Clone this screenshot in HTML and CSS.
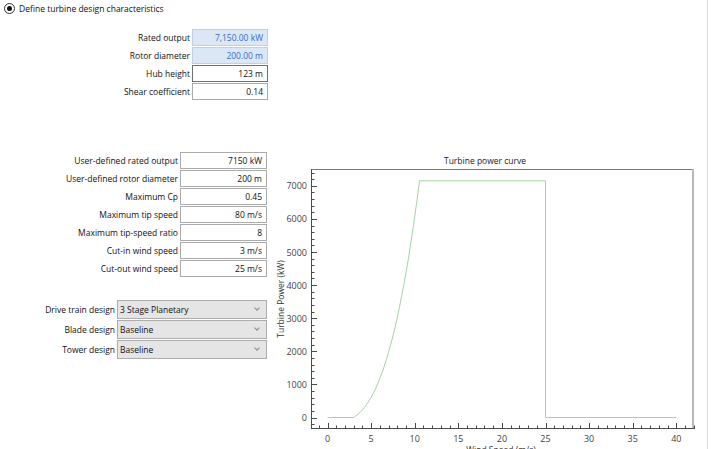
FILE: index.html
```html
<!DOCTYPE html>
<html lang="en">
<head>
    <meta charset="UTF-8">
    <title>Turbine design</title>
    <link rel="stylesheet" href="styles.css">
</head>
<body>
<div class="window">
    <label class="option">
        <span class="radio"><span class="dot"></span></span>
        Define turbine design characteristics
    </label>

    <div class="fields summary">
        <span class="lbl">Rated output</span><span class="box readonly">7,150.00 kW</span>
        <span class="lbl">Rotor diameter</span><span class="box readonly">200.00 m</span>
        <span class="lbl">Hub height</span><span class="box focused">123 m</span>
        <span class="lbl">Shear coefficient</span><span class="box">0.14</span>
    </div>

    <div class="lower">
        <div class="inputs">
            <div class="fields custom">
                <span class="lbl">User-defined rated output</span><span class="box">7150 kW</span>
                <span class="lbl">User-defined rotor diameter</span><span class="box">200 m</span>
                <span class="lbl">Maximum Cp</span><span class="box">0.45</span>
                <span class="lbl">Maximum tip speed</span><span class="box">80 m/s</span>
                <span class="lbl">Maximum tip-speed ratio</span><span class="box">8</span>
                <span class="lbl">Cut-in wind speed</span><span class="box">3 m/s</span>
                <span class="lbl">Cut-out wind speed</span><span class="box">25 m/s</span>
            </div>

            <div class="fields combos">
                <span class="lbl">Drive train design</span><span class="combo">3 Stage Planetary<i class="chev"></i></span>
                <span class="lbl">Blade design</span><span class="combo">Baseline<i class="chev"></i></span>
                <span class="lbl">Tower design</span><span class="combo">Baseline<i class="chev"></i></span>
            </div>
        </div>

        <svg class="chart" width="449" height="299" viewBox="258 150 449 299">
            <text class="title" x="485" y="163" text-anchor="middle">Turbine power curve</text>
            <line x1="311" y1="168.5" x2="693" y2="168.5" class="frame-top"/>
            <line x1="693" y1="168" x2="693" y2="427" class="frame-right"/>
            <g id="ticks"></g>
            <line x1="311.5" y1="168" x2="311.5" y2="428" class="axis"/>
            <line x1="311" y1="427.5" x2="695" y2="427.5" class="axis"/>
            <g id="labels" class="tick-text"></g>
            <path id="curve" class="curve"/>
            <text class="axis-title" transform="translate(284 298) rotate(-90)" text-anchor="middle">Turbine Power (kW)</text>
            <text class="axis-title" x="501" y="452" text-anchor="middle">Wind Speed (m/s)</text>
        </svg>
    </div>
</div>

<script>
    const ns = 'http://www.w3.org/2000/svg';
    const ticks = document.getElementById('ticks');
    const labels = document.getElementById('labels');

    // axis scales in page pixels
    const sx = v => 327.5 + v * 8.72;
    const sy = p => 416.5 - p * 0.0331;

    let d = '';
    for (let v = -1; v <= 42; v++) {
        const x = Math.round(sx(v)) + 0.5;
        const len = v % 5 === 0 ? 5 : 2.5;
        d += `M${x} 427V${427 - len}`;
    }
    for (let p = -200; p <= 7400; p += 200) {
        const y = Math.round(sy(p)) + 0.5;
        const len = p % 1000 === 0 ? 5 : 2.5;
        d += `M312 ${y}H${312 + len}`;
    }
    const tp = document.createElementNS(ns, 'path');
    tp.setAttribute('d', d);
    tp.setAttribute('class', 'tick');
    ticks.appendChild(tp);

    for (let v = 0; v <= 40; v += 5) {
        const t = document.createElementNS(ns, 'text');
        t.setAttribute('x', sx(v));
        t.setAttribute('y', 440.5);
        t.setAttribute('text-anchor', 'middle');
        t.textContent = v;
        labels.appendChild(t);
    }
    for (let p = 0; p <= 7000; p += 1000) {
        const t = document.createElementNS(ns, 'text');
        t.setAttribute('x', 307);
        t.setAttribute('y', sy(p) + 3.5);
        t.setAttribute('text-anchor', 'end');
        t.textContent = p;
        labels.appendChild(t);
    }

    // power curve: cubic between cut-in and rated, flat to cut-out
    const rated = 7150, cutIn = 3, cutOut = 25;
    const k = 6.23;
    const pts = [[0, 0], [cutIn, 0]];
    for (let v = cutIn + 0.25; ; v += 0.25) {
        const p = k * (v * v * v - cutIn ** 3);
        if (p >= rated) {
            const vr = Math.cbrt(rated / k + cutIn ** 3);
            pts.push([vr, rated]);
            break;
        }
        pts.push([v, p]);
    }
    pts.push([cutOut, rated], [cutOut, 0], [40, 0]);
    document.getElementById('curve').setAttribute('d',
        pts.map((q, i) => (i ? 'L' : 'M') + sx(q[0]).toFixed(1) + ' ' + sy(q[1]).toFixed(1)).join(''));
</script>
</body>
</html>
```

FILE: styles.css
```css
body {
    margin: 0;
    background-color: white;
    font-family: 'Open Sans', 'Noto Sans', sans-serif;
    font-size: 8.5px;
    color: #111;
}

.window {
    width: 707px;
    height: 449px;
    border-right: 1px solid #dadada;
    overflow: hidden;
}

.option {
    display: flex;
    align-items: center;
    gap: 4px;
    height: 16px;
    padding: 0 0 0 4px;
}

.radio {
    width: 9px;
    height: 9px;
    border: 1px solid #333;
    border-radius: 50%;
    display: flex;
    align-items: center;
    justify-content: center;
}

.radio .dot {
    width: 5px;
    height: 5px;
    border-radius: 50%;
    background-color: #111;
}

.fields {
    display: grid;
    align-items: center;
    row-gap: 1px;
}

.lbl {
    text-align: right;
    padding-right: 2px;
    white-space: nowrap;
}

.box {
    height: 15px;
    line-height: 15px;
    border: 1px solid #ababab;
    text-align: right;
    padding-right: 4px;
}

.box.readonly {
    background-color: #dce7f5;
    border-color: #c3cfdf;
    color: #3a6cc0;
}

.box.focused {
    border-color: #6f6f6f;
}

.summary {
    grid-template-columns: 192px 76px;
    margin-top: 13px;
}

.lower {
    display: flex;
    margin-top: 51px;
}

.inputs {
    width: 258px;
    flex-shrink: 0;
}

.custom {
    grid-template-columns: 180px 87px;
    margin-top: 1px;
}

.combos {
    grid-template-columns: 117px 150px;
    row-gap: 1px;
    margin-top: 23px;
}

.combo {
    position: relative;
    height: 17px;
    line-height: 17px;
    background-color: #e5e5e5;
    border: 1px solid #adadad;
    padding-left: 2px;
}

.chev {
    position: absolute;
    right: 7px;
    top: 5px;
    width: 3px;
    height: 3px;
    border-right: 1px solid #888;
    border-bottom: 1px solid #888;
    transform: rotate(45deg);
}

.chart {
    display: block;
}

.chart text {
    font-family: 'Open Sans', 'Noto Sans', sans-serif;
    font-size: 8.5px;
}

.chart .title {
    fill: #222;
}

.frame-top {
    stroke: #7a7a7a;
    stroke-width: 1;
}

.frame-right {
    stroke: #b9b9b9;
    stroke-width: 2;
}

.axis {
    stroke: #4a4a4a;
    stroke-width: 1;
}

.tick {
    stroke: #4a4a4a;
    stroke-width: 1;
    fill: none;
}

.chart .tick-text text {
    fill: #444;
    font-size: 9px;
}

.axis-title {
    fill: #333;
}

.curve {
    fill: none;
    stroke: #a3d4a3;
    stroke-width: 1;
}
```
